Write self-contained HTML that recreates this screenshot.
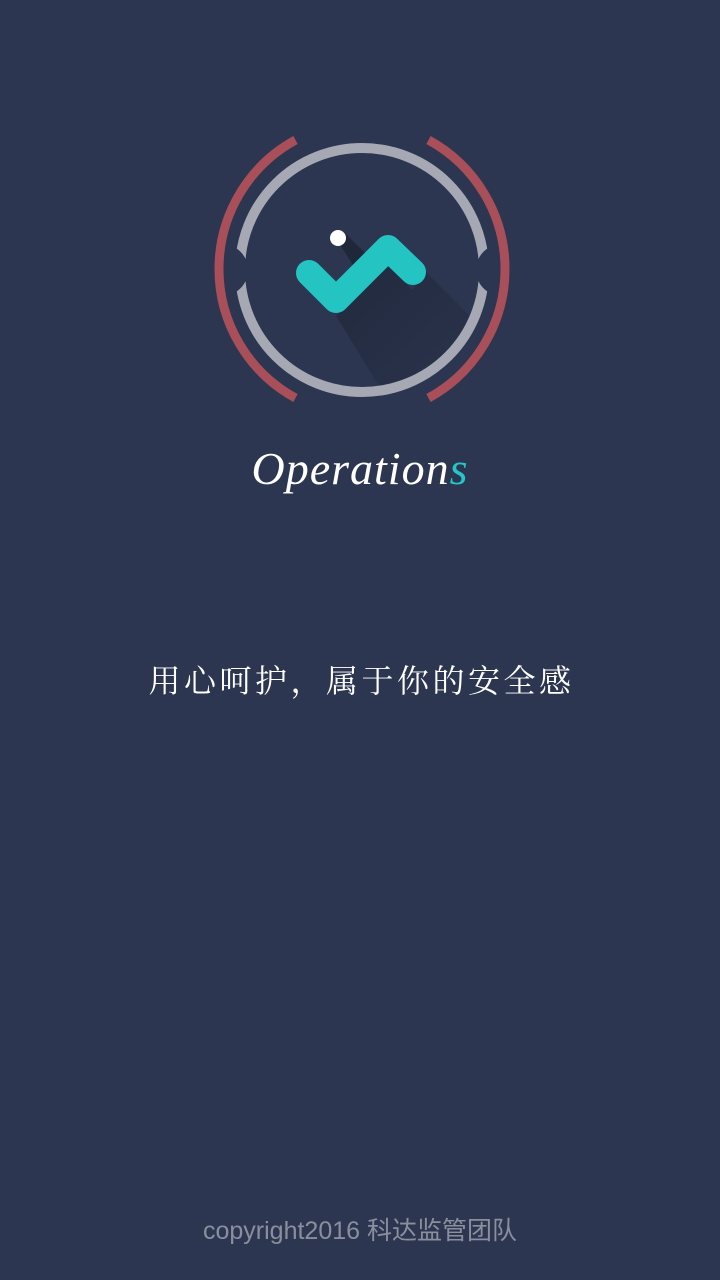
<!DOCTYPE html>
<html><head><meta charset="utf-8"><style>
html,body{margin:0;padding:0;}
body{width:720px;height:1280px;background:#2c3650;position:relative;overflow:hidden;font-family:"Liberation Sans","Noto Sans CJK SC",sans-serif;}
svg{position:absolute;left:0;top:0;}
.op{position:absolute;left:0;width:720px;top:442px;text-align:center;font-family:"Liberation Serif",serif;font-style:italic;font-size:46px;color:#fff;letter-spacing:1px;}
.op span{color:#25c6c6;}
.slogan{position:absolute;left:0;width:720px;top:656px;text-align:center;font-family:"Liberation Sans","Noto Serif CJK SC",serif;font-size:32px;color:#fff;letter-spacing:3.5px;padding-left:3px;box-sizing:border-box;}
.foot{position:absolute;left:0;width:720px;top:1211px;text-align:center;font-size:25px;color:#8a8f9e;}
</style></head><body>
<svg width="720" height="520" viewBox="0 0 720 520">
 <defs>
  <linearGradient id="sh" x1="0" y1="0" x2="1" y2="1">
   <stop offset="0" stop-color="#1a2130" stop-opacity="0.6"/>
   <stop offset="1" stop-color="#1a2130" stop-opacity="0"/>
  </linearGradient>
  <clipPath id="cc"><circle cx="362" cy="270" r="117"/></clipPath>
 </defs>
 <g clip-path="url(#cc)">
  <polygon points="336,316 388,264 412,290 426,272 500,346 430,420 400,420" fill="url(#sh)"/>
  <polygon points="332,232 344,232 370,258 356,270" fill="#1a2130" opacity="0.7"/>
 </g>
 <circle cx="362" cy="270" r="122" fill="none" stroke="#a6a9b4" stroke-width="10"/>
 <circle cx="222" cy="270" r="26" fill="#2c3650"/>
 <circle cx="502" cy="270" r="26" fill="#2c3650"/>
 <path d="M295.5,140 A147,147 0 0 0 295.5,398" fill="none" stroke="#a84f5a" stroke-width="9"/>
 <path d="M428.5,140 A147,147 0 0 1 428.5,398" fill="none" stroke="#a84f5a" stroke-width="9"/>
 <polyline points="309,273 336,300 388,248 413,272" fill="none" stroke="#24c4c3" stroke-width="26" stroke-linejoin="round" stroke-linecap="round"/>
 <circle cx="338" cy="238" r="8" fill="#fff"/>
</svg>
<div class="op">Operation<span>s</span></div>
<div class="slogan">用心呵护，属于你的安全感</div>
<div class="foot">copyright2016 科达监管团队</div>
</body></html>
